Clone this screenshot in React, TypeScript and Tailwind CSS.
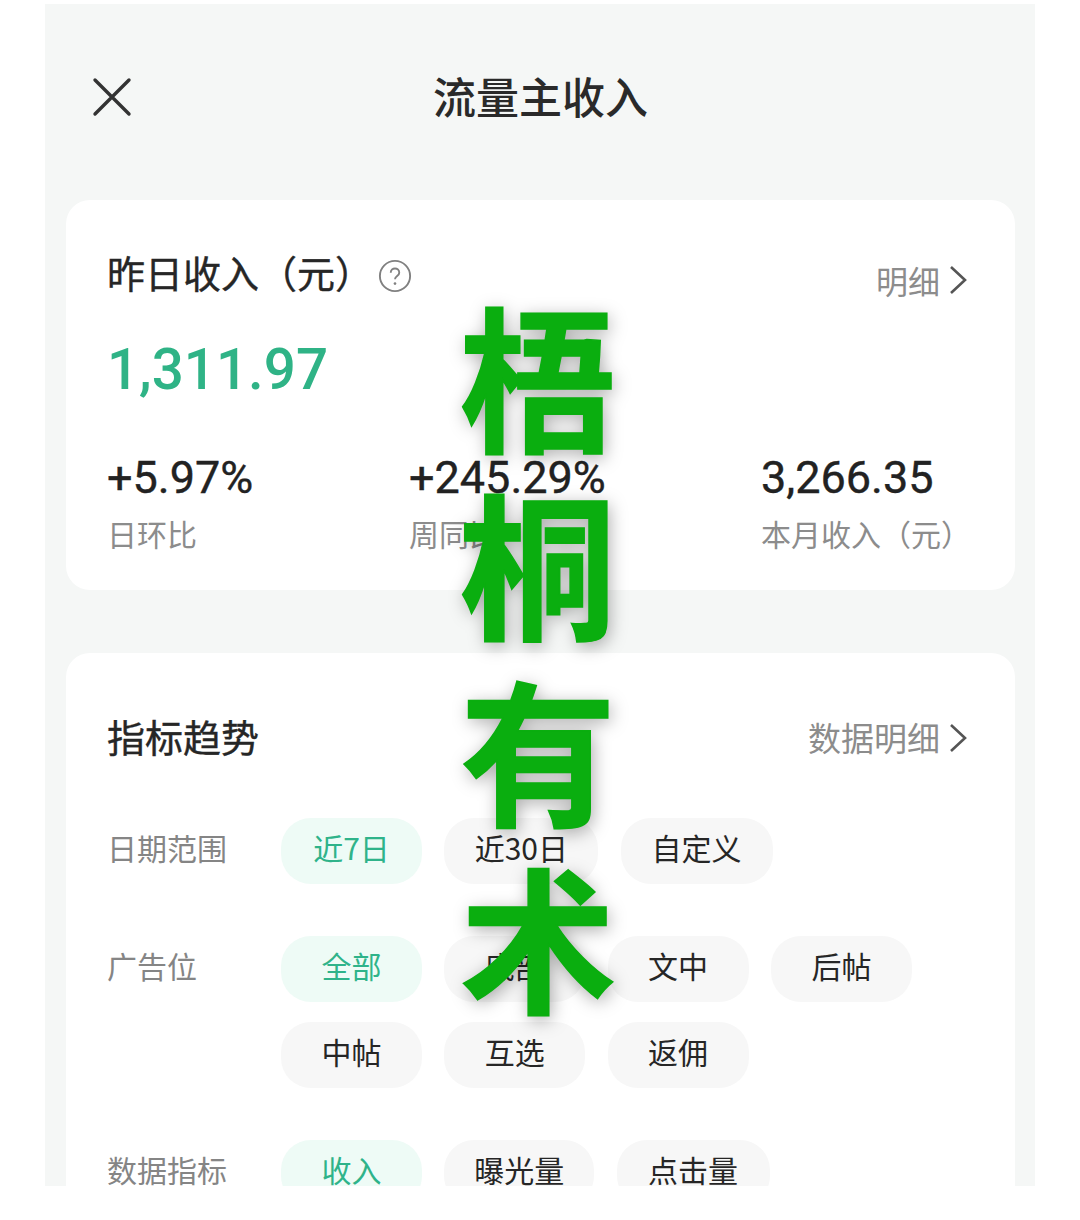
import React from "react";

const font = { fontFamily: '"Noto Sans CJK SC", sans-serif' };

function Chevron() {
  return (
    <svg width="18" height="30" viewBox="0 0 18 30" fill="none" stroke="#555" strokeWidth="2.6" className="ml-[9px]">
      <path d="M2 2l14 13L2 28" />
    </svg>
  );
}

type P = { t: string; w: string; on?: boolean };

function Pill({ t, w, on }: P) {
  return (
    <div className={`h-[66px] rounded-[30px] flex items-center justify-center pb-[7px] text-[30px] shrink-0 ${w} ${on ? "bg-[#eefbf6] text-[#2fb38a]" : "bg-[#f7f7f7] text-[#262626]"}`}>
      {t}
    </div>
  );
}

function Row({ label, rows, className }: { label: string; rows: P[][]; className: string }) {
  return (
    <div className={`flex ${className}`}>
      <div className="w-[174px] h-[66px] flex items-center pb-[8px] text-[30px] text-[#858585] shrink-0">{label}</div>
      <div className="flex flex-col gap-[20px]">
        {rows.map((r, i) => (
          <div key={i} className="flex gap-[22.3px]">
            {r.map((p) => (
              <Pill key={p.t} {...p} />
            ))}
          </div>
        ))}
      </div>
    </div>
  );
}

function Stat({ v, l, w }: { v: string; l: string; w: string }) {
  return (
    <div className={`${w} shrink-0`}>
      <div className="h-[50px] flex items-center text-[45px] text-[#222] font-['Roboto'] leading-none [-webkit-text-stroke:0.4px_#222]">{v}</div>
      <div className="mt-[6px] text-[30px] text-[#8c8c8c] leading-[50px] whitespace-nowrap">{l}</div>
    </div>
  );
}

export default function App() {
  return (
    <div className="relative w-[1080px] h-[1220px] bg-white overflow-hidden pt-[4px] pl-[45px]" style={font}>
      <div className="w-[990px] h-[1182px] bg-[#f5f7f6] pl-[21px] pr-[20px] overflow-hidden">
        <header className="h-[196px] relative flex items-center justify-center pb-[14px]">
          <svg width="40" height="40" viewBox="0 0 40 40" className="absolute left-[26px] top-[73px]" stroke="#333" strokeWidth="3.4" strokeLinecap="round">
            <path d="M3 3l34 34M37 3L3 37" />
          </svg>
          <h1 className="text-[43px] font-medium text-[#2a2a2a] leading-none">流量主收入</h1>
        </header>

        <section className="h-[390px] bg-white rounded-[24px] px-[41px] pt-[44px]">
          <div className="flex items-center justify-between h-[60px]">
            <div className="flex items-center">
              <span className="text-[38px] text-[#262626] leading-none pb-[4px] [-webkit-text-stroke:0.4px_#262626]">昨日收入（元）</span>
              <svg width="34" height="34" viewBox="0 0 36 36" fill="none" className="ml-[5px] mt-[4px]">
                <circle cx="18" cy="18" r="16" stroke="#808080" strokeWidth="2" />
                <path d="M13.5 14.500c0-6 9-6 9 0 0 3.500-4.500 3.500-4.500 7" stroke="#808080" strokeWidth="2" />
                <circle cx="18" cy="26" r="1.400" fill="#808080" />
              </svg>
            </div>
            <div className="flex items-center text-[32px] text-[#8c8c8c] mt-[11px] mr-[7px]">
              明细
              <Chevron />
            </div>
          </div>
          <div className="h-[90px] mt-[18px] flex items-center text-[56.500px] font-medium text-[#2fb386] font-['Roboto'] leading-none pt-[6px]">
            1,311.97
          </div>
          <div className="flex mt-[40px]">
            <Stat v="+5.97%" l="日环比" w="w-[302px]" />
            <Stat v="+245.29%" l="周同比" w="w-[352px]" />
            <Stat v="3,266.35" l="本月收入（元）" w="w-[220px]" />
          </div>
        </section>

        <section className="mt-[63px] h-[600px] bg-white rounded-[24px] px-[41px] pt-[55px]">
          <div className="flex items-center justify-between h-[60px]">
            <span className="text-[38px] text-[#262626] leading-none pb-[4px] [-webkit-text-stroke:0.4px_#262626]">指标趋势</span>
            <div className="flex items-center text-[33px] text-[#8c8c8c] mr-[7px]">
              数据明细
              <Chevron />
            </div>
          </div>
          <Row
            className="mt-[50px]"
            label="日期范围"
            rows={[[{ t: "近7日", w: "w-[141px]", on: true }, { t: "近30日", w: "w-[154px]" }, { t: "自定义", w: "w-[152px]" }]]}
          />
          <Row
            className="mt-[52px]"
            label="广告位"
            rows={[
              [{ t: "全部", w: "w-[141px]", on: true }, { t: "底部", w: "w-[141px]" }, { t: "文中", w: "w-[141px]" }, { t: "后帖", w: "w-[141px]" }],
              [{ t: "中帖", w: "w-[141px]" }, { t: "互选", w: "w-[141px]" }, { t: "返佣", w: "w-[141px]" }],
            ]}
          />
          <Row
            className="mt-[52px]"
            label="数据指标"
            rows={[[{ t: "收入", w: "w-[141px]", on: true }, { t: "曝光量", w: "w-[150px]" }, { t: "点击量", w: "w-[153px]" }]]}
          />
        </section>
      </div>

      <div className="absolute left-[460px] top-[279px] w-[156px] flex flex-col text-[156px] font-bold text-[#0aae0f] leading-[187px] [-webkit-text-stroke:1.5px_#0aae0f] [text-shadow:2px_4px_18px_rgba(0,0,0,0.35)]">
        <span>梧</span>
        <span>桐</span>
        <span>有</span>
        <span>术</span>
      </div>
    </div>
  );
}
